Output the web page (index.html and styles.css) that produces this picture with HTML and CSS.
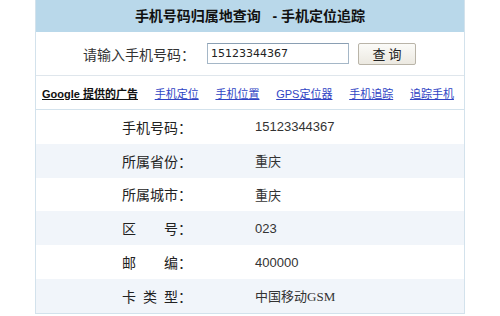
FILE: index.html
```html
<!DOCTYPE html>
<html lang="zh-CN">
<head>
    <meta charset="UTF-8">
    <title>手机号码归属地查询 - 手机定位追踪</title>
    <link rel="stylesheet" href="styles.css">
</head>
<body>
    <div class="lookup">
        <div class="lookup__title">手机号码归属地查询 &nbsp; - 手机定位追踪</div>

        <form class="lookup__form">
            <label class="lookup__label" for="mobile">请输入手机号码：</label>
            <input class="lookup__input" id="mobile" type="text" value="15123344367">
            <button class="lookup__btn" type="button">查 询</button>
        </form>

        <div class="ads">
            <a class="ads__google" href="#">Google 提供的广告</a>
            <a class="ads__link" href="#">手机定位</a>
            <a class="ads__link" href="#">手机位置</a>
            <a class="ads__link" href="#">GPS定位器</a>
            <a class="ads__link" href="#">手机追踪</a>
            <a class="ads__link" href="#">追踪手机</a>
        </div>

        <div class="result">
            <div class="result__row">
                <div class="result__key">手机号码：</div>
                <div class="result__val">15123344367</div>
            </div>
            <div class="result__row result__row--alt">
                <div class="result__key">所属省份：</div>
                <div class="result__val">重庆</div>
            </div>
            <div class="result__row">
                <div class="result__key">所属城市：</div>
                <div class="result__val">重庆</div>
            </div>
            <div class="result__row result__row--alt">
                <div class="result__key">区　　号：</div>
                <div class="result__val">023</div>
            </div>
            <div class="result__row">
                <div class="result__key">邮　　编：</div>
                <div class="result__val">400000</div>
            </div>
            <div class="result__row result__row--alt">
                <div class="result__key">卡&ensp;类&ensp;型：</div>
                <div class="result__val">中国移动<span class="serif">GSM</span></div>
            </div>
        </div>
    </div>
</body>
</html>
```

FILE: styles.css
```css
body {
    margin: 0;
    background: #fff;
    font-family: "Liberation Sans", "Noto Sans CJK SC", sans-serif;
    color: #222;
}

.lookup,
.lookup * {
    box-sizing: border-box;
}

.lookup {
    width: 430px;
    margin-left: 35px;
    border: 1px solid #d3e2ec;
    border-top: 0;
    background: #fff;
}

/* заголовок */
.lookup__title {
    height: 32px;
    line-height: 32px;
    background: #b9d8ea;
    text-align: center;
    font-size: 14px;
    font-weight: bold;
    color: #111;
}

/* форма */
.lookup__form {
    display: flex;
    align-items: center;
    height: 44px;
    margin: 0;
    padding-left: 47px;
    border-bottom: 1px solid #dfe6ec;
}

.lookup__label {
    width: 124px;
    font-size: 14px;
    color: #333;
}

.lookup__input {
    width: 142px;
    height: 21px;
    margin-left: 0;
    padding: 0 3px;
    border: 1px solid #a5b7c7;
    border-top-color: #8a9fb3;
    font-family: "DejaVu Sans", sans-serif;
    font-size: 11px;
    color: #222;
}

.lookup__btn {
    width: 58px;
    height: 22px;
    margin-left: 9px;
    padding: 0;
    border: 1px solid #b9b4a8;
    border-radius: 2px;
    background: linear-gradient(#fbfbf8, #ece9e1);
    font-family: "Noto Sans CJK SC", sans-serif;
    font-size: 13px;
    color: #222;
}

/* реклама */
.ads {
    display: flex;
    justify-content: space-between;
    align-items: center;
    height: 34px;
    padding: 0 10px 0 6px;
    border-bottom: 1px solid #d3e2ec;
    font-size: 11px;
}

.ads__google {
    color: #111;
    font-weight: bold;
    text-decoration: underline;
}

.ads__link {
    color: #3044c4;
    text-decoration: underline;
}

/* результат */
.result__row {
    display: grid;
    grid-template-columns: 219px 1fr;
    align-items: center;
    height: 33.8px;
    font-size: 14px;
    color: #222;
}

.result__row--alt {
    background: #f1f5fa;
}

.result__key {
    padding-left: 86px;
}

.result__val {
    font-size: 13px;
    color: #333;
}

.serif {
    font-family: "Liberation Serif", serif;
}
```
